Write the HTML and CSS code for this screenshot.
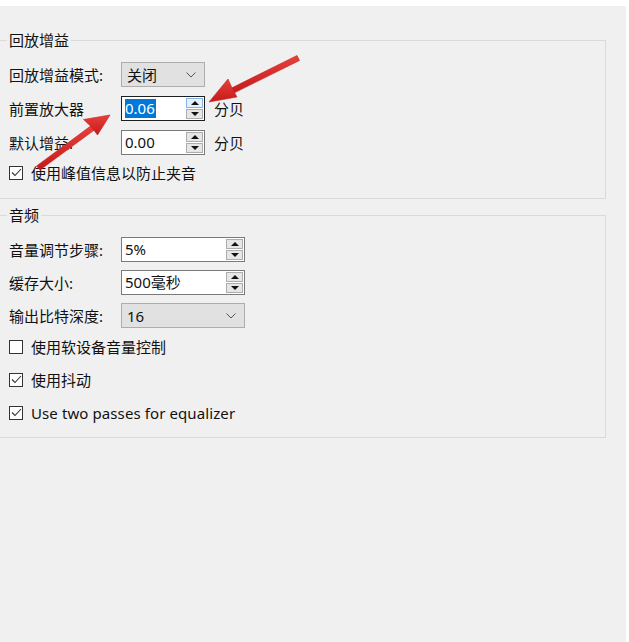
FILE: index.html
```html
<!DOCTYPE html>
<html lang="zh-CN">
<head>
<meta charset="utf-8">
<title>回放设置</title>
<link rel="stylesheet" href="styles.css">
</head>
<body>
<div class="panel">
  <div class="group g1">
    <div class="legend">回放增益</div>
    <div class="row">
      <span class="label">回放增益模式:</span>
      <div class="combo narrow"><span>关闭</span><svg class="chev" width="10" height="6" viewBox="0 0 10 6"><path d="M0.5 0.5 L5 5 L9.5 0.5" fill="none" stroke="#555" stroke-width="1"/></svg></div>
    </div>
    <div class="row">
      <span class="label">前置放大器</span>
      <div class="spin narrow focused">
        <span class="val"><span class="sel">0.06</span></span>
        <div class="btns"><div class="btn hot"><i class="up"></i></div><div class="btn"><i class="down"></i></div></div>
      </div>
      <span class="unit">分贝</span>
    </div>
    <div class="row">
      <span class="label">默认增益:</span>
      <div class="spin narrow">
        <span class="val">0.00</span>
        <div class="btns"><div class="btn"><i class="up"></i></div><div class="btn"><i class="down"></i></div></div>
      </div>
      <span class="unit">分贝</span>
    </div>
    <div class="check first"><span class="box on"><svg width="11" height="9" viewBox="0 0 11 9"><path d="M1 4.5 L4 7.5 L10 1" fill="none" stroke="#333" stroke-width="1.1"/></svg></span><span>使用峰值信息以防止夹音</span></div>
  </div>

  <div class="group g2">
    <div class="legend">音频</div>
    <div class="row">
      <span class="label">音量调节步骤:</span>
      <div class="spin wide">
        <span class="val">5%</span>
        <div class="btns"><div class="btn"><i class="up"></i></div><div class="btn"><i class="down"></i></div></div>
      </div>
    </div>
    <div class="row">
      <span class="label">缓存大小:</span>
      <div class="spin wide">
        <span class="val">500毫秒</span>
        <div class="btns"><div class="btn"><i class="up"></i></div><div class="btn"><i class="down"></i></div></div>
      </div>
    </div>
    <div class="row">
      <span class="label">输出比特深度:</span>
      <div class="combo wide"><span>16</span><svg class="chev" width="10" height="6" viewBox="0 0 10 6"><path d="M0.5 0.5 L5 5 L9.5 0.5" fill="none" stroke="#555" stroke-width="1"/></svg></div>
    </div>
    <div class="check first"><span class="box"></span><span>使用软设备音量控制</span></div>
    <div class="check"><span class="box on"><svg width="11" height="9" viewBox="0 0 11 9"><path d="M1 4.5 L4 7.5 L10 1" fill="none" stroke="#333" stroke-width="1.1"/></svg></span><span>使用抖动</span></div>
    <div class="check"><span class="box on"><svg width="11" height="9" viewBox="0 0 11 9"><path d="M1 4.5 L4 7.5 L10 1" fill="none" stroke="#333" stroke-width="1.1"/></svg></span><span class="en">Use two passes for equalizer</span></div>
  </div>

  <svg class="arrows" width="626" height="636" viewBox="0 6 626 636">
    <defs>
      <linearGradient id="rg" x1="0" y1="0" x2="0" y2="1">
        <stop offset="0" stop-color="#e8403c"/>
        <stop offset="1" stop-color="#c41a1a"/>
      </linearGradient>
    </defs>
    <g fill="url(#rg)" stroke="#c82020" stroke-width="0.6" stroke-linejoin="round">
      <polygon points="297,55.5 299.5,60.5 232,94 229.5,89"/>
      <polygon points="209,102 228,79 232,88 237,97"/>
      <polygon points="36.5,166 40,170 95,129.5 92,125"/>
      <polygon points="110,115 83.5,119.5 91,126.5 97.5,135"/>
    </g>
  </svg>
</div>
</body>
</html>
```

FILE: styles.css
```css
html, body {
  margin: 0;
  padding: 0;
  background: #ffffff;
}
body {
  width: 629px;
  height: 642px;
  overflow: hidden;
  font-family: "Noto Sans", "Noto Sans CJK SC", sans-serif;
  font-size: 15px;
  color: #111111;
}
.panel {
  position: relative;
  margin-top: 6px;
  width: 626px;
  height: 636px;
  background: #f0f0f0;
  display: flex;
  flex-direction: column;
}
.group {
  position: relative;
  width: 606px;
  border: 1px solid #dadada;
  border-left: none;
  box-sizing: border-box;
  padding-left: 9px;
  padding-top: 21px;
  display: flex;
  flex-direction: column;
}
.g1 {
  margin-top: 34px;
  height: 159px;
  gap: 9px;
}
.g2 {
  margin-top: 16px;
  height: 223px;
  gap: 8px;
}
.legend {
  position: absolute;
  left: 7px;
  top: -11px;
  padding: 0 2px;
  background: #f0f0f0;
  line-height: 20px;
}
.row {
  display: flex;
  align-items: center;
  height: 25px;
}
.label {
  width: 112px;
  line-height: 20px;
  white-space: nowrap;
}
.combo {
  box-sizing: border-box;
  height: 25px;
  border: 1px solid #adadad;
  background: #e1e1e1;
  display: flex;
  align-items: center;
  justify-content: space-between;
  padding: 0 8px 0 5px;
}
.narrow { width: 84px; }
.wide { width: 124px; }
.spin {
  box-sizing: border-box;
  height: 25px;
  border: 1px solid #7a7a7a;
  background: #ffffff;
  display: flex;
  align-items: center;
  justify-content: space-between;
  padding: 0 1px 0 3px;
}
.spin.focused { border-color: #1f1f1f; }
.val {
  line-height: 19px;
  white-space: nowrap;
}
.sel {
  display: inline-block;
  background: #0078d7;
  color: #ffffff;
  padding-right: 1px;
}
.btns {
  display: flex;
  flex-direction: column;
  gap: 1px;
}
.btn {
  box-sizing: border-box;
  width: 17px;
  height: 10px;
  border: 1px solid #adadad;
  background: #e6e6e6;
  display: flex;
  align-items: center;
  justify-content: center;
}
.btn.hot {
  background: #e5f1fb;
  border-color: #7eb4ea;
}
.up, .down {
  width: 0;
  height: 0;
  border-left: 4px solid transparent;
  border-right: 4px solid transparent;
}
.up { border-bottom: 4px solid #111; }
.down { border-top: 4px solid #111; }
.unit {
  margin-left: 9px;
}
.check {
  display: flex;
  align-items: center;
  height: 25px;
  gap: 8px;
}
.g1 .check.first { margin-top: -4px; }
.g2 .check.first { margin-top: -2px; }
.box {
  box-sizing: border-box;
  width: 14px;
  height: 14px;
  border: 1px solid #333333;
  background: #ffffff;
  display: flex;
  align-items: center;
  justify-content: center;
}
.en {
  letter-spacing: 0.1px;
}
.arrows {
  position: absolute;
  left: 0;
  top: 0;
  pointer-events: none;
}
```
